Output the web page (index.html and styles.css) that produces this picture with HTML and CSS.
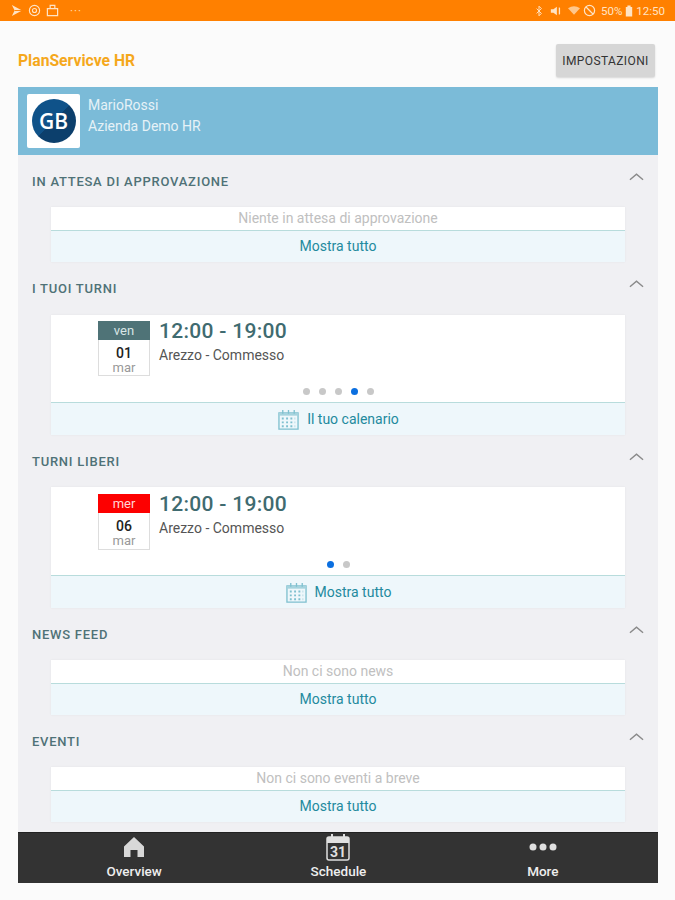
FILE: index.html
```html
<!DOCTYPE html>
<html lang="en">
<head>
    <meta charset="UTF-8">
    <meta name="viewport" content="width=device-width, initial-scale=1.0">
    <title>PlanService HR</title>
    <link rel="stylesheet" href="styles.css">
</head>
<body>

    <!-- Status bar -->
    <div class="statusbar">
        <div class="status-left">
            <svg class="status-icon" viewBox="0 0 14 14"><path d="M2 1l11 6-11 6 3-6z" fill="#ffe3c4"/><path d="M5 7h8" stroke="#ff8000"/></svg>
            <svg class="status-icon" viewBox="0 0 14 14"><circle cx="7" cy="7" r="5.500" fill="none" stroke="#ffe3c4" stroke-width="1.200"/><circle cx="7" cy="7" r="2.200" fill="none" stroke="#ffe3c4" stroke-width="1.200"/></svg>
            <svg class="status-icon" viewBox="0 0 14 14"><path d="M1.500 5h11v7.500h-11zM4.500 5V1.500h5V5" fill="none" stroke="#ffe3c4" stroke-width="1.300"/></svg>
            <span class="status-more">···</span>
        </div>
        <div class="status-right">
            <svg class="status-small" viewBox="0 0 10 14"><path d="M2 4l6 6-3 3V1l3 3-6 6" fill="none" stroke="#ffe3c4" stroke-width="1.200"/></svg>
            <svg class="status-mute" viewBox="0 0 14 14"><path d="M1 5h3l4-3v10L4 9H1z" fill="#ffe3c4"/><path d="M11 3v8" stroke="#ffe3c4" stroke-width="1.500"/></svg>
            <svg class="status-wifi" viewBox="0 0 14 12"><path d="M0 3.500Q7-1.500 14 3.500L7 11z" fill="#ffc78c"/></svg>
            <svg class="status-icon" viewBox="0 0 14 14"><circle cx="7" cy="7" r="5.500" fill="none" stroke="#ffe3c4" stroke-width="1.300"/><path d="M3 3l8 8" stroke="#ffe3c4" stroke-width="1.300"/></svg>
            <span class="status-pct">50%</span>
            <svg class="status-batt" viewBox="0 0 10 14"><path d="M3 0h4v2h2v12H1V2h2z" fill="#ffe3c4"/></svg>
            <span>12:50</span>
        </div>
    </div>

    <div class="page">
        <header class="topbar">
            <span class="app-title">PlanServicve HR</span>
            <button class="settings-btn">IMPOSTAZIONI</button>
        </header>

        <div class="profile">
            <div class="logo-box">
                <div class="logo">GB</div>
            </div>
            <div class="profile-text">
                <p>MarioRossi</p>
                <p>Azienda Demo HR</p>
            </div>
        </div>

        <main class="content">

            <section>
                <div class="section-head">
                    <h2>IN ATTESA DI APPROVAZIONE</h2>
                    <svg class="chevron" viewBox="0 0 16 9"><path d="M1 8l7-6 7 6" /></svg>
                </div>
                <div class="card">
                    <div class="empty">Niente in attesa di approvazione</div>
                    <a class="card-foot">Mostra tutto</a>
                </div>
            </section>

            <section>
                <div class="section-head second">
                    <h2>I TUOI TURNI</h2>
                    <svg class="chevron" viewBox="0 0 16 9"><path d="M1 8l7-6 7 6" /></svg>
                </div>
                <div class="card">
                    <div class="shift">
                        <div class="date-box">
                            <div class="day">ven</div>
                            <div class="num">01</div>
                            <div class="month">mar</div>
                        </div>
                        <div>
                            <div class="time">12:00 - 19:00</div>
                            <div class="place">Arezzo - Commesso</div>
                        </div>
                    </div>
                    <div class="dots">
                        <span></span><span></span><span></span><span class="on"></span><span></span>
                    </div>
                    <a class="card-foot tall">
                        <svg class="cal" viewBox="0 0 24 22"><use href="#cal-icon"/></svg>
                        Il tuo calenario
                    </a>
                </div>
            </section>

            <section>
                <div class="section-head">
                    <h2>TURNI LIBERI</h2>
                    <svg class="chevron" viewBox="0 0 16 9"><path d="M1 8l7-6 7 6" /></svg>
                </div>
                <div class="card">
                    <div class="shift free">
                        <div class="date-box">
                            <div class="day red">mer</div>
                            <div class="num">06</div>
                            <div class="month">mar</div>
                        </div>
                        <div>
                            <div class="time">12:00 - 19:00</div>
                            <div class="place">Arezzo - Commesso</div>
                        </div>
                    </div>
                    <div class="dots">
                        <span class="on"></span><span></span>
                    </div>
                    <a class="card-foot tall">
                        <svg class="cal" viewBox="0 0 24 22"><use href="#cal-icon"/></svg>
                        Mostra tutto
                    </a>
                </div>
            </section>

            <section>
                <div class="section-head">
                    <h2>NEWS FEED</h2>
                    <svg class="chevron" viewBox="0 0 16 9"><path d="M1 8l7-6 7 6" /></svg>
                </div>
                <div class="card">
                    <div class="empty">Non ci sono news</div>
                    <a class="card-foot">Mostra tutto</a>
                </div>
            </section>

            <section>
                <div class="section-head">
                    <h2>EVENTI</h2>
                    <svg class="chevron" viewBox="0 0 16 9"><path d="M1 8l7-6 7 6" /></svg>
                </div>
                <div class="card">
                    <div class="empty">Non ci sono eventi a breve</div>
                    <a class="card-foot">Mostra tutto</a>
                </div>
            </section>

        </main>

        <nav class="tabbar">
            <a class="tab">
                <svg class="tab-icon" viewBox="0 0 24 24"><path d="M12 2l10 9.500V22h-6.500v-7h-7v7H2V11.500z" fill="#d8d8d8"/></svg>
                Overview
            </a>
            <a class="tab">
                <svg class="tab-icon cal-tab" viewBox="0 0 26 28">
                    <rect x="2" y="4" width="22" height="23" rx="2" fill="#333" stroke="#e0e0e0" stroke-width="1.500"/>
                    <rect x="2" y="4" width="22" height="6" fill="#e0e0e0"/>
                    <path d="M7 1v6M19 1v6" stroke="#e0e0e0" stroke-width="2"/>
                    <text x="13" y="24" text-anchor="middle" class="cal-num">31</text>
                </svg>
                Schedule
            </a>
            <a class="tab">
                <svg class="tab-icon dots-icon" viewBox="0 0 28 24"><circle cx="4" cy="12" r="3.500" fill="#e0e0e0"/><circle cx="14" cy="12" r="3.500" fill="#e0e0e0"/><circle cx="24" cy="12" r="3.500" fill="#e0e0e0"/></svg>
                More
            </a>
        </nav>
    </div>

    <svg class="defs" width="0" height="0">
        <symbol id="cal-icon" viewBox="0 0 24 22">
            <path d="M2 4h20v17H2z" fill="none" stroke="#7fc0cf" stroke-width="1.400"/>
            <path d="M2 4h20v3H2z" fill="#a5d3de"/>
            <path d="M6 1v4M12 1v4M18 1v4" stroke="#7fc0cf" stroke-width="1.400"/>
            <path d="M5 10h14M5 14h14M5 18h14" stroke="#7fc0cf" stroke-width="2" stroke-dasharray="2 2.500"/>
        </symbol>
    </svg>

</body>
</html>
```

FILE: styles.css
```css
body {
    font-family: Roboto, "Liberation Sans", sans-serif;
    background-color: #fbfbfb;
    margin: 0;
    padding: 0;
    width: 675px;
    height: 900px;
    overflow: hidden;
}

.defs {
    display: block;
}

/* Status bar */
.statusbar {
    height: 21px;
    background-color: #ff8000;
    color: #ffe3c4;
    font-size: 11.500px;
    display: flex;
    justify-content: space-between;
    align-items: center;
    padding: 0 10px;
    box-sizing: border-box;
}

.status-left,
.status-right {
    display: flex;
    align-items: center;
}

.status-left {
    gap: 5px;
}

.status-icon {
    width: 13px;
    height: 13px;
}

.status-small {
    width: 8px;
    height: 12px;
    margin-right: 7px;
}

.status-mute {
    width: 12px;
    height: 12px;
    margin-right: 6px;
}

.status-wifi {
    width: 12px;
    height: 11px;
    margin-right: 3px;
}

.status-pct {
    margin: 0 3px 0 5px;
}

.status-batt {
    width: 8px;
    height: 12px;
    margin-right: 3px;
}

.status-more {
    margin-left: 6px;
    letter-spacing: 1px;
}

.page {
    padding: 0 17px 0 18px;
}

/* Header */
.topbar {
    height: 66px;
    display: flex;
    justify-content: space-between;
    align-items: center;
    padding-top: 13px;
    box-sizing: border-box;
}

.app-title {
    color: #f5a81c;
    font-size: 15.700px;
    font-weight: bold;
}

.settings-btn {
    width: 99px;
    height: 33px;
    margin-right: 3px;
    padding: 0;
    background-color: #d6d6d6;
    color: #333;
    border: none;
    border-radius: 2px;
    box-shadow: 0 1px 2px rgba(0, 0, 0, 0.15);
    font-family: inherit;
    font-size: 12px;
    letter-spacing: 0.4px;
}

/* Profile */
.profile {
    height: 68px;
    background-color: #7bbbd8;
    display: flex;
    align-items: flex-start;
    padding: 7px 0 0 9px;
    box-sizing: border-box;
}

.logo-box {
    width: 53px;
    height: 54px;
    background-color: #fff;
    border-radius: 2px;
    display: flex;
    justify-content: center;
    align-items: center;
}

.logo {
    width: 44px;
    height: 44px;
    border-radius: 50%;
    background: linear-gradient(135deg, #0f5289 50%, #0c3f6c 50%);
    color: #fff;
    font-family: "Open Sans", sans-serif;
    font-size: 21px;
    font-weight: 600;
    line-height: 44px;
    text-align: center;
}

.profile-text {
    margin: 1px 0 0 8px;
    color: #e6f2f7;
    font-size: 14px;
}

.profile-text p {
    margin: 0;
    line-height: 21px;
}

/* Sections */
.content {
    height: 677px;
    background-color: #f0f0f3;
    box-sizing: border-box;
}

.section-head {
    height: 52px;
    position: relative;
    padding: 20px 0 0 14px;
    box-sizing: border-box;
}

.section-head.second {
    height: 53px;
}

h2 {
    margin: 0;
    color: #4f7277;
    font-size: 13px;
    font-weight: 500;
    letter-spacing: 0.75px;
    line-height: 14px;
}

.chevron {
    position: absolute;
    right: 14px;
    top: 17px;
    width: 15px;
    height: 9px;
    fill: none;
    stroke: #8a8a8a;
    stroke-width: 1.500;
}

.card {
    margin: 0 33px;
    background-color: #fff;
    box-shadow: 0 0 2px rgba(0, 0, 0, 0.06);
}

.empty {
    height: 23px;
    line-height: 23px;
    text-align: center;
    color: #c0c0c0;
    font-size: 14px;
}

.card-foot {
    display: flex;
    justify-content: center;
    align-items: center;
    gap: 7px;
    height: 30px;
    padding-bottom: 1px;
    background-color: #eef7fb;
    border-top: 1px solid #b8dcdc;
    color: #238a9e;
    font-size: 14px;
}

.card-foot.tall {
    height: 32px;
    padding-bottom: 0;
}

.cal {
    width: 23px;
    height: 21px;
}

/* Shift row */
.shift {
    display: flex;
    height: 69px;
    padding: 6px 0 0 47px;
    box-sizing: border-box;
}

.shift.free {
    height: 70px;
    padding-top: 7px;
}

.date-box {
    width: 52px;
    height: 55px;
    box-sizing: border-box;
    border: 1px solid #ddd;
    border-top: none;
    text-align: center;
    margin-right: 9px;
}

.shift.free .date-box {
    height: 56px;
}

.day {
    height: 19px;
    margin: 0 -1px;
    background-color: #4f7377;
    color: #d9e6e6;
    font-size: 13px;
    line-height: 19px;
}

.day.red {
    background-color: #fd0000;
    color: #ffd6d6;
}

.num {
    margin-top: 5px;
    color: #222;
    font-size: 14px;
    font-weight: 500;
    line-height: 16px;
}

.month {
    color: #999;
    font-size: 13px;
    line-height: 14px;
}

.time {
    color: #3f6b70;
    font-size: 21px;
    font-weight: 500;
    line-height: 20px;
    letter-spacing: 0.3px;
}

.place {
    margin-top: 6px;
    color: #555;
    font-size: 14px;
    line-height: 16px;
}

.dots {
    height: 18px;
    display: flex;
    justify-content: center;
    align-items: flex-start;
    gap: 9px;
    padding-top: 4px;
    box-sizing: border-box;
}

.dots span {
    width: 7px;
    height: 7px;
    border-radius: 50%;
    background-color: #c8c8c8;
}

.dots span.on {
    background-color: #0b6fe0;
}

/* Bottom tabs */
.tabbar {
    height: 51px;
    background-color: #333;
    border-top: 1px solid #222;
    padding: 0 13px 0 14px;
    box-sizing: border-box;
    display: grid;
    grid-template-columns: repeat(3, 1fr);
}

.tab {
    display: flex;
    flex-direction: column;
    align-items: center;
    color: #eee;
    font-size: 13.500px;
    font-weight: 500;
    line-height: 15px;
}

.tab-icon {
    width: 24px;
    height: 24px;
    margin: 2px 0 5px;
}

.dots-icon {
    width: 28px;
}

.cal-tab {
    width: 26px;
    height: 28px;
    margin: 0 0 3px;
}

.cal-num {
    fill: #e0e0e0;
    font-size: 14px;
    font-weight: bold;
}
```
